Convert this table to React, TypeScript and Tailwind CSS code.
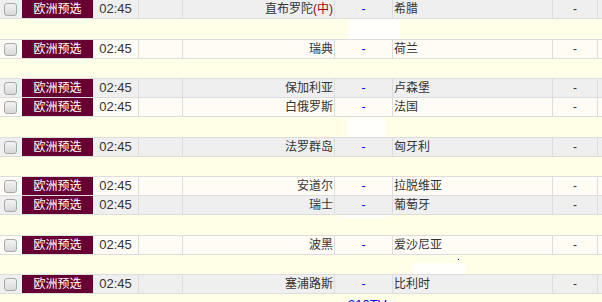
const matches = [
  { home: '直布罗陀', neutral: true, away: '希腊', gap: 'h-[21px]' },
  { home: '瑞典', away: '荷兰', gap: 'h-[20px]' },
  { home: '保加利亚', away: '卢森堡' },
  { home: '白俄罗斯', away: '法国', gap: 'h-[21px]' },
  { home: '法罗群岛', away: '匈牙利', gap: 'h-[20px]' },
  { home: '安道尔', away: '拉脱维亚' },
  { home: '瑞士', away: '葡萄牙', gap: 'h-[21px]' },
  { home: '波黑', away: '爱沙尼亚', gap: 'h-[20px]' },
  { home: '塞浦路斯', away: '比利时', gap: 'h-[30px]' },
];

function Spacer({ gap, index }: { gap: string; index: number }) {
  return (
    <div className={`relative w-full border-b border-[#dddddd] bg-[#ffffe7] overflow-hidden ${gap}`}>
      {/* stray white blocks left over in the spacer rows */}
      {index === 0 && <div className="absolute left-[348px] top-0 h-full w-[52px] bg-[#fffffb]" />}
      {index === 3 && <div className="absolute left-[347px] top-[1px] h-[19px] w-[38px] bg-[#fffffb]" />}
      {index === 6 && <div className="absolute left-[343px] top-0 h-[3px] w-[43px] bg-[#fffffb]" />}
      {index === 7 && (
        <>
          <div className="absolute left-[412px] top-[8px] h-[12px] w-[53px] bg-[#fffffb]" />
          <div className="absolute left-[458px] top-[4px] h-[1px] w-[1px] bg-[#0000cc]" />
        </>
      )}
      {index === 8 && (
        <span className="absolute left-[348px] top-[4px] text-[13px] leading-[13px] text-[#0000ee]">310TV</span>
      )}
    </div>
  );
}

export default function App() {
  return (
    <div
      className="w-[602px] h-[302px] overflow-hidden bg-white text-[12px] text-[#333333]"
      style={{ fontFamily: '"Liberation Sans", "Noto Sans CJK SC", sans-serif' }}
    >
      {matches.map((m, i) => (
        <div key={i}>
          <div
            className={`flex h-[19px] border-b border-[#dddddd] ${i % 2 === 0 ? 'bg-[#efefef]' : 'bg-[#fffcf6]'}`}
          >
            <div className="w-[22px] flex items-center pl-[4px]">
              <input
                type="checkbox"
                className="appearance-none w-[13px] h-[13px] rounded-[3px] border border-[#a8a8a8] bg-linear-to-b from-[#f3f3f3] to-[#d9d9d9]"
              />
            </div>
            <div className="w-[71px] bg-[#660033] text-white flex items-center justify-center">欧洲预选</div>
            <div className="w-[46px] border-r border-[#dddddd] flex items-center justify-center text-[13px]">02:45</div>
            <div className="w-[44px] border-r border-[#dddddd]" />
            <div className="w-[152px] border-r border-[#dddddd] flex items-center justify-end pr-[1px]">
              {m.home}
              {m.neutral && <span className="text-[#990000]">(中)</span>}
            </div>
            <div className="w-[58px] border-r border-[#dddddd] flex items-center justify-center text-[#0000ff]">-</div>
            <div className="w-[160px] border-r border-[#dddddd] flex items-center pl-[1px]">{m.away}</div>
            <div className="w-[45px] border-r border-[#dddddd] flex items-center justify-center">-</div>
            <div className="flex-1" />
          </div>
          {m.gap && <Spacer gap={m.gap} index={i} />}
        </div>
      ))}
    </div>
  );
}
